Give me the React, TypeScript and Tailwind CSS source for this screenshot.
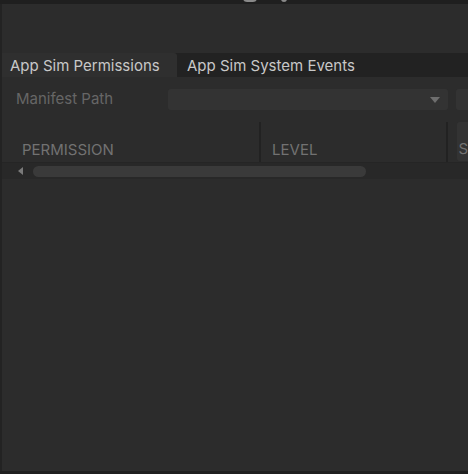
import React from 'react';

export default function App() {
  return (
    <div className="w-[468px] h-[474px] bg-[#1f1f1f] overflow-hidden font-['Inter',sans-serif] flex flex-col">
      {/* top strip with clipped toolbar icons */}
      <div className="h-[4px] relative shrink-0">
        <div className="absolute left-[243px] top-[-8px] w-[14px] h-[10px] rounded-[4px] border-2 border-[#8a8a8a]" />
        <div className="absolute left-[281px] top-[-4px] w-[6px] h-[6px] rounded-full bg-[#8a8a8a]" />
      </div>

      <div className="flex-1 flex flex-col bg-[#2c2c2c] border-l-[2px] border-[#232323]">
        {/* empty toolbar area */}
        <div className="h-[49px] shrink-0" />

        {/* tabs */}
        <div className="h-[24px] flex shrink-0 bg-[#222222]">
          <div className="w-[175px] bg-[#2f2f2f] flex items-center pl-[8px] pt-[2px] text-[15px] text-[#c8c8c8] rounded-tr-[3px]">
            App Sim Permissions
          </div>
          <div className="flex items-center pl-[10px] pt-[2px] text-[15px] text-[#c8c8c8]">App Sim System Events</div>
        </div>

        {/* manifest path row */}
        <div className="h-[45px] flex items-center shrink-0">
          <div className="w-[167px] pl-[14px] text-[15px] text-[#666666]">Manifest Path</div>
          <div className="w-[282px] h-[21px] bg-[#333333] rounded-[3px] flex items-center justify-end pr-[8px]">
            <svg width="10" height="6" viewBox="0 0 10 6">
              <path d="M0 0h10L5 6z" fill="#6e6e6e" />
            </svg>
          </div>
          <div className="ml-[8px] w-[12px] h-[21px] bg-[#333333] rounded-l-[3px]" />
        </div>

        {/* table header */}
        <div className="h-[41px] flex shrink-0 border-b border-[#252525]">
          <div className="w-[258px] flex items-end pb-[1px] pl-[20px] text-[15px] text-[#727272]">
            PERMISSION
          </div>
          <div className="w-[2px] bg-[#222222]" />
          <div className="w-[186px] flex items-end pb-[1px] pl-[11px] text-[15px] text-[#727272]">LEVEL</div>
          <div className="w-[2px] bg-[#222222]" />
          <div className="flex-1 flex flex-col pl-[9px]">
            <div className="w-full h-[39px] bg-[#333333] rounded-l-[3px] flex items-end text-[15px] text-[#727272] pb-[1px] pl-[1px]">
              S
            </div>
          </div>
        </div>

        {/* horizontal scrollbar */}
        <div className="h-[16px] flex items-center shrink-0 bg-[#282828]">
          <svg className="ml-[16px]" width="5" height="8" viewBox="0 0 5 8">
            <path d="M5 0v8L0 4z" fill="#7a7a7a" />
          </svg>
          <div className="ml-[10px] w-[333px] h-[11px] bg-[#3a3a3a] rounded-full" />
        </div>

        <div className="flex-1" />
      </div>

      <div className="h-[3px] shrink-0 bg-[#1f1f1f]" />
    </div>
  );
}
